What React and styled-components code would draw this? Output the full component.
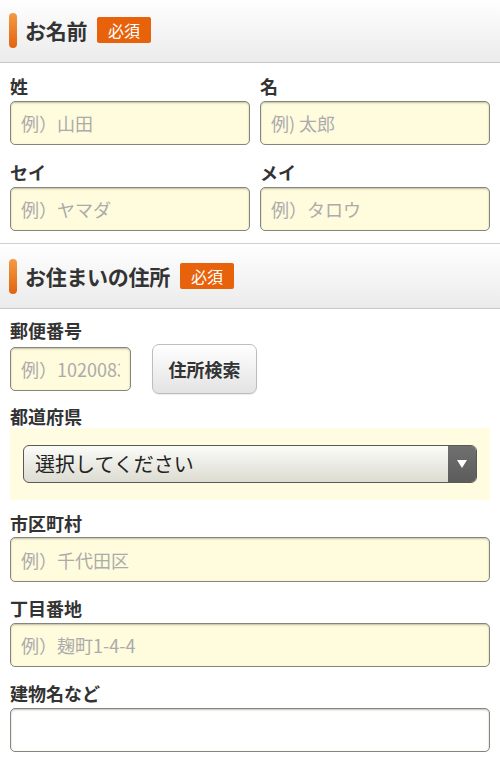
import React from "react";
import styled, { createGlobalStyle } from "styled-components";

const Global = createGlobalStyle`
  html, body { margin: 0; padding: 0; background: #fff; }
  body { font-family: "Noto Sans CJK JP", "Noto Sans", sans-serif; color: #333; overflow: hidden; }
  * { box-sizing: border-box; }
`;

const Page = styled.div`
  margin-top: -3px;
  width: 500px;
`;

const Header = styled.div`
  height: 66px;
  border-top: 1px solid #cfcfcf;
  border-bottom: 1px solid #c8c8c8;
  background: linear-gradient(#ffffff, #ebebeb);
  display: flex;
  align-items: center;
  padding-left: 9px;
`;

const Bar = styled.span`
  width: 8px;
  height: 35px;
  border-radius: 4px;
  background: linear-gradient(#f39a45, #e2640f);
  margin-right: 8px;
`;

const Title = styled.h2`
  margin: 0;
  font-size: 21px;
  font-weight: 700;
  color: #333;
  line-height: 1;
  letter-spacing: -0.3px;
`;

const Badge = styled.span`
  margin-left: 10px;
  background: #e8620b;
  color: #fff;
  font-size: 16px;
  line-height: 26px;
  height: 26px;
  padding: 0 11px;
  border-radius: 2px;
`;

const Body = styled.div`
  display: flex;
  flex-direction: column;
  padding: ${(p) => p.$pad};
  gap: 0;
`;

const Row = styled.div`
  display: grid;
  grid-template-columns: 250px 250px;
  margin-top: ${(p) => p.$mt || 0}px;
`;

const Col = styled.div`
  padding: ${(p) => (p.$right ? "0 10px 0 10px" : "0 0 0 10px")};
  display: flex;
  flex-direction: column;
`;

const Field = styled.div`
  display: flex;
  flex-direction: column;
  padding: 0 10px;
  margin-top: ${(p) => p.$mt || 0}px;
`;

const Label = styled.label`
  font-size: 18px;
  font-weight: 700;
  line-height: 24px;
  color: #333;
`;

const Input = styled.input`
  display: block;
  width: ${(p) => p.$w || "100%"};
  height: ${(p) => p.$h || 44}px;
  margin-top: ${(p) => p.$mt ?? 3}px;
  border: 1px solid #85857a;
  border-radius: 5px;
  background: ${(p) => (p.$plain ? "#fff" : "#fffbdd")};
  box-shadow: inset 0 1px 2px rgba(0, 0, 0, 0.25);
  padding: 0 10px;
  font-family: "Noto Sans CJK JP", sans-serif;
  font-size: 18px;
  color: #333;
  outline: none;
  &::placeholder { color: #ababab; }
`;

const PostalRow = styled.div`
  display: flex;
  align-items: center;
  margin-top: 2px;
  height: 50px;
`;

const SearchButton = styled.button`
  margin-left: 21px;
  width: 105px;
  height: 50px;
  border: 1px solid #bdbdbd;
  border-radius: 7px;
  background: linear-gradient(#ffffff, #e3e3e3);
  font-family: "Noto Sans CJK JP", sans-serif;
  font-size: 18px;
  font-weight: 700;
  color: #333;
  box-shadow: 0 1px 1px rgba(0, 0, 0, 0.08);
`;

const Panel = styled.div`
  background: #fffce2;
  padding: 17px 13px;
`;

const SelectBox = styled.div`
  height: 38px;
  display: flex;
  border: 1px solid #5a5a52;
  border-radius: 6px;
  overflow: hidden;
  background: linear-gradient(#fbfbf8, #dcdcd2);
`;

const SelectText = styled.span`
  flex: 1;
  padding-left: 11px;
  font-size: 20px;
  line-height: 36px;
  color: #222;
`;

const Arrow = styled.span`
  width: 28px;
  background: linear-gradient(#707070, #5c5c5c);
  display: flex;
  align-items: center;
  justify-content: center;
`;

export default function App() {
  return (
    <>
      <Global />
      <Page>
        <Header>
          <Bar />
          <Title>お名前</Title>
          <Badge>必須</Badge>
        </Header>
        <Body $pad="11px 0 12px">
          <Row>
            <Col>
              <Label>姓</Label>
              <Input placeholder="例）山田" />
            </Col>
            <Col $right>
              <Label>名</Label>
              <Input placeholder="例) 太郎" />
            </Col>
          </Row>
          <Row $mt={15}>
            <Col>
              <Label>セイ</Label>
              <Input placeholder="例）ヤマダ" />
            </Col>
            <Col $right>
              <Label>メイ</Label>
              <Input placeholder="例）タロウ" />
            </Col>
          </Row>
        </Body>
        <Header>
          <Bar />
          <Title>お住まいの住所</Title>
          <Badge>必須</Badge>
        </Header>
        <Body $pad="9px 0 20px">
          <Field>
            <Label>郵便番号</Label>
            <PostalRow>
              <Input $w="121px" $mt={0} placeholder="例）1020083" />
              <SearchButton>住所検索</SearchButton>
            </PostalRow>
          </Field>
          <Field $mt={10}>
            <Label>都道府県</Label>
            <Panel>
              <SelectBox>
                <SelectText>選択してください</SelectText>
                <Arrow>
                  <svg width="10" height="8" viewBox="0 0 10 8">
                    <path d="M0 0 H10 L5 8 Z" fill="#fff" />
                  </svg>
                </Arrow>
              </SelectBox>
            </Panel>
          </Field>
          <Field $mt={11}>
            <Label>市区町村</Label>
            <Input $mt={2} $h={45} placeholder="例）千代田区" />
          </Field>
          <Field $mt={14}>
            <Label>丁目番地</Label>
            <Input placeholder="例）麹町1-4-4" />
          </Field>
          <Field $mt={14}>
            <Label>建物名など</Label>
            <Input $plain />
          </Field>
        </Body>
      </Page>
    </>
  );
}
